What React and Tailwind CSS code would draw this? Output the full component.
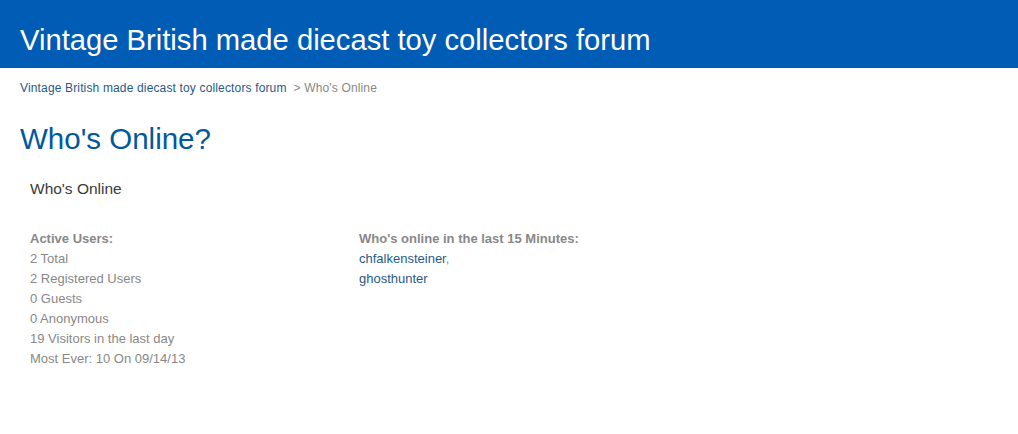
export default function App() {
  return (
    <div className="min-h-[434px] bg-white font-['Liberation_Sans',Arial,sans-serif]">
      <header className="h-[68px] bg-[#005cb5] px-5 pt-[23px]">
        <h1 className="text-[29.2px] leading-[34px] text-white">
          Vintage British made diecast toy collectors forum
        </h1>
      </header>

      <nav className="px-5 pt-[13px] text-[12px] leading-[14px] tracking-[0.15px]">
        <a href="#" className="text-[#1f5a8c]">Vintage British made diecast toy collectors forum</a>
        <span className="text-[#888] ml-[7px]">&gt; Who's Online</span>
      </nav>

      <h2 className="px-5 mt-[28px] text-[29.5px] leading-[32px] text-[#00599c]">Who's Online?</h2>

      <div className="px-[30px] mt-[24px]">
        <h3 className="text-[15.5px] leading-[20px] text-[#3a3a3a]">Who's Online</h3>

        <div className="mt-[30px] flex text-[13px] leading-[20px] text-[#888]">
          <div className="w-[329px]">
            <div className="font-bold">Active Users:</div>
            <div>2 Total</div>
            <div>2 Registered Users</div>
            <div>0 Guests</div>
            <div>0 Anonymous</div>
            <div>19 Visitors in the last day</div>
            <div>Most Ever: 10 On 09/14/13</div>
          </div>
          <div>
            <div className="font-bold">Who's online in the last 15 Minutes:</div>
            <div>
              <a href="#" className="text-[#1f5a8c]">chfalkensteiner</a>,
            </div>
            <div>
              <a href="#" className="text-[#1f5a8c]">ghosthunter</a>
            </div>
          </div>
        </div>
      </div>
    </div>
  )
}
